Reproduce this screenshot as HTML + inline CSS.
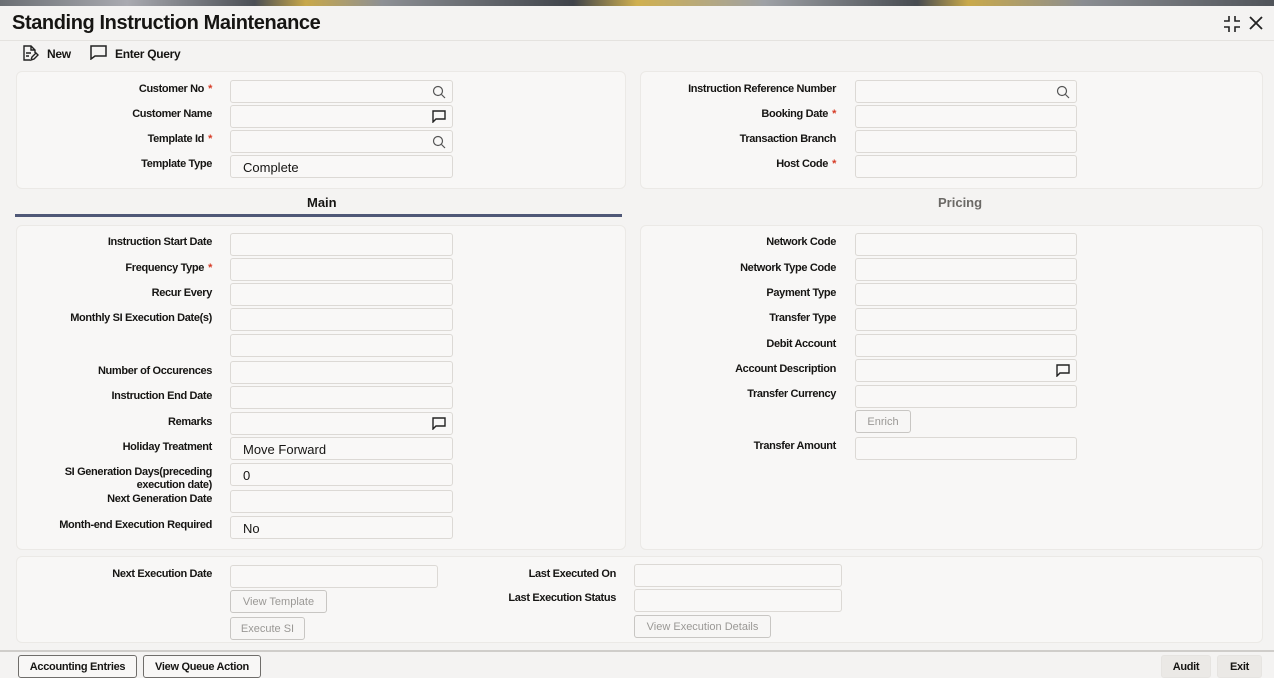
<!DOCTYPE html>
<html><head><meta charset="utf-8">
<style>
*{box-sizing:border-box;margin:0;padding:0}
body{width:1274px;height:678px;overflow:hidden;background:#f4f3f2;font-family:"Liberation Sans",sans-serif;position:relative;color:#161513}
.a{position:absolute}
.top{left:0;top:0;width:1274px;height:6px;background:linear-gradient(90deg,#6b6f74,#a9aab0 10%,#4b4f55 20%,#c8a84a 24%,#8d9095 30%,#3f434a 45%,#d0b050 50%,#9ea1a6 60%,#474b51 72%,#c9a94b 76%,#8a8d92 85%,#50545a 100%)}
.panel{background:#f8f7f6;border:1px solid #ebe9e6;border-radius:6px}
.l{font-size:11px;font-weight:bold;text-align:right;letter-spacing:-0.35px;line-height:13px;color:#161513}
.s{color:#d63b25;margin-left:4px}
.i{height:23px;background:#f9f8f7;border:1px solid #dcd9d5;border-radius:3px;font-size:13px;padding-left:12px;line-height:23px}
.b{height:23px;border:1px solid #c8c6c3;border-radius:3px;background:#f7f6f5;font-size:11px;color:#9a9895;text-align:center;line-height:23px}
.fb{height:23px;border:1px solid #6f6d6a;border-radius:3px;background:#f8f7f6;font-size:11px;font-weight:bold;letter-spacing:-0.3px;text-align:center;line-height:22px}
.ic{position:absolute;right:6px;top:4px}
.m{margin-top:1px}
</style></head><body>
<div class="a top"></div>
<div class="a" style="left:12px;top:12px;font-size:20px;font-weight:bold;letter-spacing:-0.4px">Standing Instruction Maintenance</div>
<svg class="a" style="left:1223px;top:15px" width="18" height="18" viewBox="0 0 18 18" fill="none" stroke="#222" stroke-width="1.6"><path d="M6 1v5H1M12 1v5h5M6 17v-5H1M12 17v-5h5"/></svg>
<svg class="a" style="left:1249px;top:16px" width="14" height="14" viewBox="0 0 14 14" stroke="#222" stroke-width="1.8"><path d="M1 1l12 12M13 1L1 13"/></svg>
<div class="a" style="left:0;top:40px;width:1274px;height:1px;background:#e4e2df"></div>
<svg class="a" style="left:21px;top:44px" width="18" height="18" viewBox="0 0 18 18" fill="none" stroke="#222" stroke-width="1.4"><path d="M9 16H3V2h7l4 4v3M10 2v4h4M5 9h5M5 12h3M10 16l1-3 4-4 2 2-4 4z"/></svg>
<div class="a" style="left:47px;top:47px;font-size:12px;font-weight:bold;letter-spacing:-0.3px">New</div>
<svg class="a" style="left:90px;top:45px" width="17" height="15" viewBox="0 0 17 15" fill="none" stroke="#222" stroke-width="1.5"><path d="M1 1h15v10H5l-4 3z"/></svg>
<div class="a" style="left:115px;top:47px;font-size:12px;font-weight:bold;letter-spacing:-0.3px">Enter Query</div>

<div class="a panel" style="left:16px;top:71px;width:610px;height:118px"></div>
<div class="a panel" style="left:640px;top:71px;width:623px;height:118px"></div>
<div class="a panel" style="left:16px;top:225px;width:610px;height:325px"></div>
<div class="a panel" style="left:640px;top:225px;width:623px;height:325px"></div>
<div class="a panel" style="left:16px;top:556px;width:1247px;height:87px"></div>

<div class="a" style="left:307px;top:195px;font-size:13px;font-weight:bold">Main</div>
<div class="a" style="left:15px;top:214px;width:607px;height:3px;background:#4f5877"></div>
<div class="a" style="left:938px;top:195px;font-size:13px;color:#6b6966;font-weight:bold">Pricing</div>

<div class="a l" style="left:20px;width:192px;top:83px">Customer No<span class="s">*</span></div>
<div class="a i" style="left:230px;top:80px;width:223px"><svg class="ic" width="14" height="14" viewBox="0 0 14 14" fill="none" stroke="#555" stroke-width="1.2"><circle cx="6" cy="6" r="4.5"/><path d="M9.5 9.5l3.5 3.5"/></svg></div>
<div class="a l" style="left:20px;width:192px;top:108px">Customer Name</div>
<div class="a i" style="left:230px;top:105px;width:223px"><svg class="ic" width="14" height="13" viewBox="0 0 14 13" fill="none" stroke="#222" stroke-width="1.4"><path d="M1 1h12v8H4l-3 3z"/></svg></div>
<div class="a l" style="left:20px;width:192px;top:133px">Template Id<span class="s">*</span></div>
<div class="a i" style="left:230px;top:130px;width:223px"><svg class="ic" width="14" height="14" viewBox="0 0 14 14" fill="none" stroke="#555" stroke-width="1.2"><circle cx="6" cy="6" r="4.5"/><path d="M9.5 9.5l3.5 3.5"/></svg></div>
<div class="a l" style="left:20px;width:192px;top:158px">Template Type</div>
<div class="a i" style="left:230px;top:155px;width:223px">Complete</div>

<div class="a l" style="left:640px;width:196px;top:83px">Instruction Reference Number</div>
<div class="a i" style="left:855px;top:80px;width:222px"><svg class="ic" width="14" height="14" viewBox="0 0 14 14" fill="none" stroke="#555" stroke-width="1.2"><circle cx="6" cy="6" r="4.5"/><path d="M9.5 9.5l3.5 3.5"/></svg></div>
<div class="a l" style="left:640px;width:196px;top:108px">Booking Date<span class="s">*</span></div>
<div class="a i" style="left:855px;top:105px;width:222px"></div>
<div class="a l" style="left:640px;width:196px;top:133px">Transaction Branch</div>
<div class="a i" style="left:855px;top:130px;width:222px"></div>
<div class="a l" style="left:640px;width:196px;top:158px">Host Code<span class="s">*</span></div>
<div class="a i" style="left:855px;top:155px;width:222px"></div>

<div class="a l" style="left:20px;width:192px;top:236px">Instruction Start Date</div>
<div class="a i" style="left:230px;top:233px;width:223px"></div>
<div class="a l" style="left:20px;width:192px;top:262px">Frequency Type<span class="s">*</span></div>
<div class="a i" style="left:230px;top:258px;width:223px"></div>
<div class="a l" style="left:20px;width:192px;top:287px">Recur Every</div>
<div class="a i" style="left:230px;top:283px;width:223px"></div>
<div class="a l" style="left:20px;width:192px;top:312px">Monthly SI Execution Date(s)</div>
<div class="a i" style="left:230px;top:308px;width:223px"></div>
<div class="a i" style="left:230px;top:334px;width:223px"></div>
<div class="a l" style="left:20px;width:192px;top:365px">Number of Occurences</div>
<div class="a i" style="left:230px;top:361px;width:223px"></div>
<div class="a l" style="left:20px;width:192px;top:390px">Instruction End Date</div>
<div class="a i" style="left:230px;top:386px;width:223px"></div>
<div class="a l" style="left:20px;width:192px;top:416px">Remarks</div>
<div class="a i" style="left:230px;top:412px;width:223px"><svg class="ic" width="14" height="13" viewBox="0 0 14 13" fill="none" stroke="#222" stroke-width="1.4"><path d="M1 1h12v8H4l-3 3z"/></svg></div>
<div class="a l" style="left:20px;width:192px;top:441px">Holiday Treatment</div>
<div class="a i" style="left:230px;top:437px;width:223px">Move Forward</div>
<div class="a l" style="left:20px;width:192px;top:466px">SI Generation Days(preceding<br>execution date)</div>
<div class="a i" style="left:230px;top:463px;width:223px">0</div>
<div class="a l" style="left:20px;width:192px;top:493px">Next Generation Date</div>
<div class="a i" style="left:230px;top:490px;width:223px"></div>
<div class="a l" style="left:20px;width:192px;top:519px">Month-end Execution Required</div>
<div class="a i" style="left:230px;top:516px;width:223px">No</div>

<div class="a l" style="left:640px;width:196px;top:236px">Network Code</div>
<div class="a i" style="left:855px;top:233px;width:222px"></div>
<div class="a l" style="left:640px;width:196px;top:262px">Network Type Code</div>
<div class="a i" style="left:855px;top:258px;width:222px"></div>
<div class="a l" style="left:640px;width:196px;top:287px">Payment Type</div>
<div class="a i" style="left:855px;top:283px;width:222px"></div>
<div class="a l" style="left:640px;width:196px;top:312px">Transfer Type</div>
<div class="a i" style="left:855px;top:308px;width:222px"></div>
<div class="a l" style="left:640px;width:196px;top:338px">Debit Account</div>
<div class="a i" style="left:855px;top:334px;width:222px"></div>
<div class="a l" style="left:640px;width:196px;top:363px">Account Description</div>
<div class="a i" style="left:855px;top:359px;width:222px"><svg class="ic" width="14" height="13" viewBox="0 0 14 13" fill="none" stroke="#222" stroke-width="1.4"><path d="M1 1h12v8H4l-3 3z"/></svg></div>
<div class="a l" style="left:640px;width:196px;top:388px">Transfer Currency</div>
<div class="a i" style="left:855px;top:385px;width:222px"></div>
<div class="a b" style="left:855px;top:410px;width:56px">Enrich</div>
<div class="a l" style="left:640px;width:196px;top:440px">Transfer Amount</div>
<div class="a i" style="left:855px;top:437px;width:222px"></div>

<div class="a l" style="left:20px;width:192px;top:568px">Next Execution Date</div>
<div class="a i" style="left:230px;top:565px;width:208px"></div>
<div class="a b" style="left:230px;top:590px;width:97px">View Template</div>
<div class="a b" style="left:230px;top:617px;width:75px">Execute SI</div>
<div class="a l" style="left:420px;width:196px;top:568px">Last Executed On</div>
<div class="a i" style="left:634px;top:564px;width:208px"></div>
<div class="a l" style="left:420px;width:196px;top:592px">Last Execution Status</div>
<div class="a i" style="left:634px;top:589px;width:208px"></div>
<div class="a b" style="left:634px;top:615px;width:137px">View Execution Details</div>

<div class="a" style="left:0;top:650px;width:1274px;height:2px;background:#cfcdca"></div>
<div class="a fb" style="left:18px;top:655px;width:119px">Accounting Entries</div>
<div class="a fb" style="left:143px;top:655px;width:118px">View Queue Action</div>
<div class="a fb" style="left:1161px;top:655px;width:50px;border-color:#e6e4e1;background:#ebe9e6">Audit</div>
<div class="a fb" style="left:1217px;top:655px;width:45px;border-color:#e6e4e1;background:#ebe9e6">Exit</div>
</body></html>
